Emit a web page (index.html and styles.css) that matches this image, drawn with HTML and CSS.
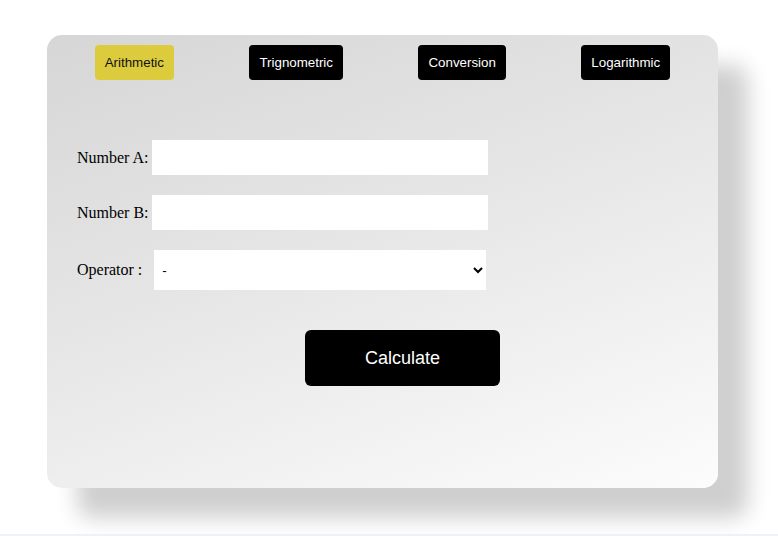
FILE: index.html
```html
<!DOCTYPE html>
<html>
<head>
<meta charset="utf-8">
<link rel="stylesheet" href="styles.css">
</head>
<body>
<div class="page">
  <div class="card">
    <nav class="tabs">
      <button class="tab active">Arithmetic</button>
      <button class="tab">Trignometric</button>
      <button class="tab">Conversion</button>
      <button class="tab">Logarithmic</button>
    </nav>
    <form class="calc">
      <div class="row"><label class="lbl">Number A:</label><input class="field" type="text"></div>
      <div class="row"><label class="lbl">Number B:</label><input class="field" type="text"></div>
      <div class="row"><label class="lbl">Operator :</label><select class="op"><option>-</option></select></div>
      <div class="actions"><button type="button" class="calc-btn">Calculate</button></div>
    </form>
  </div>
</div>
<div class="strip"></div>
</body>
</html>
```

FILE: styles.css
```css
html, body {
  margin: 0;
  padding: 0;
  background: #ffffff;
}
.page {
  padding: 35px 0 0 47px;
  height: 499px;
}
.card {
  width: 671px;
  height: 453px;
  box-sizing: border-box;
  border-radius: 15px;
  background: linear-gradient(160deg, #d6d6d6 0%, #e6e6e6 45%, #fcfcfc 100%);
  box-shadow: 30px 30px 22px #cfcfcf;
  padding: 10px 10px 0 10px;
}
.tabs {
  display: flex;
  justify-content: space-around;
}
.tab {
  height: 35px;
  padding: 0 10px;
  border: none;
  border-radius: 4px;
  background: #000000;
  color: #ffffff;
  font-family: Arial, "Liberation Sans", sans-serif;
  font-size: 13.33px;
}
.tab.active {
  background: #dccb3c;
  color: #111111;
}
.calc {
  margin-top: 60px;
  padding-left: 20px;
  display: flex;
  flex-direction: column;
}
.row {
  display: flex;
  align-items: center;
  margin-bottom: 20px;
  font-family: "Times New Roman", "Liberation Serif", serif;
  font-size: 16px;
  color: #000;
}
.lbl {
  margin-right: 3px;
}
.field {
  width: 336px;
  height: 35px;
  box-sizing: border-box;
  border: none;
  background: #fff;
  padding: 0 4px;
  outline: none;
}
.op {
  margin-left: 9px;
  width: 332px;
  height: 40px;
  box-sizing: border-box;
  border: none;
  background: #fff;
  padding: 0 4px;
  font-family: Arial, "Liberation Sans", sans-serif;
  font-size: 13.33px;
  color: #000;
}
.actions {
  margin-top: 20px;
  padding-left: 228px;
}
.calc-btn {
  width: 195px;
  height: 56px;
  border: none;
  border-radius: 6px;
  background: #000;
  color: #fff;
  font-family: Arial, "Liberation Sans", sans-serif;
  font-size: 18px;
}
.strip {
  height: 2px;
  background: #eef2f6;
}
```
